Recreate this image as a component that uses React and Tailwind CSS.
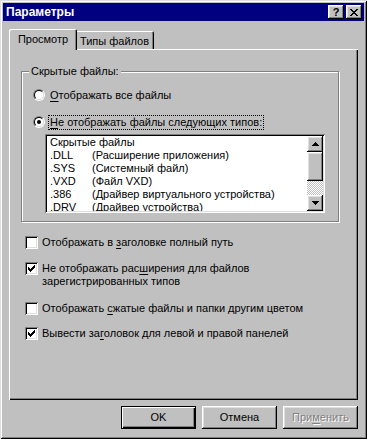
import React from "react";

const raised =
  "bg-[#c0c0c0] shadow-[inset_-1px_-1px_#000,inset_1px_1px_#fff,inset_-2px_-2px_#808080,inset_2px_2px_#dfdfdf]";
const sunken =
  "bg-white shadow-[inset_1px_1px_#808080,inset_-1px_-1px_#fff,inset_2px_2px_#000,inset_-2px_-2px_#dfdfdf]";

const hiddenTypes = [
  [".DLL", "(Расширение приложения)"],
  [".SYS", "(Системный файл)"],
  [".VXD", "(Файл VXD)"],
  [".386", "(Драйвер виртуального устройства)"],
  [".DRV", "(Драйвер устройства)"],
];

const U = ({ children }) => <span className="underline underline-offset-2">{children}</span>;

function Radio({ checked }) {
  return (
    <div className="w-[12px] h-[12px] shrink-0 rounded-full border border-t-[#808080] border-l-[#808080] border-b-white border-r-white">
      <div className="w-[10px] h-[10px] rounded-full border border-t-black border-l-black border-b-[#dfdfdf] border-r-[#dfdfdf] bg-white flex items-center justify-center">
        {checked && <div className="w-[4px] h-[4px] rounded-full bg-black" />}
      </div>
    </div>
  );
}

function Check({ checked }) {
  return (
    <div className={`w-[13px] h-[13px] shrink-0 flex items-center justify-center ${sunken}`}>
      {checked && (
        <svg width="7" height="7" viewBox="0 0 7 7" shapeRendering="crispEdges">
          <path
            fill="#000"
            d="M0 2h1v3H0zM1 3h1v3H1zM2 4h1v3H2zM3 3h1v3H3zM4 2h1v3H4zM5 1h1v3H5zM6 0h1v3H6z"
          />
        </svg>
      )}
    </div>
  );
}

function Arrow({ down }) {
  return (
    <svg width="7" height="4" viewBox="0 0 7 4" shapeRendering="crispEdges">
      <path
        fill="#000"
        d={
          down
            ? "M0 0h7v1H6v1H5v1H4v1H3V3H2V2H1V1H0z"
            : "M3 0h1v1h1v1h1v1h1v1H0V3h1V2h1V1h1z"
        }
      />
    </svg>
  );
}

function Option({ checked, children }) {
  return (
    <div className="flex items-start gap-[4px]">
      <Check checked={checked} />
      <div>{children}</div>
    </div>
  );
}

export default function App() {
  return (
    <div className="w-[367px] h-[439px] bg-[#c0c0c0] p-[3px] flex flex-col text-black font-['Liberation_Sans',Arial,sans-serif] text-[11px] leading-[13px] shadow-[inset_1px_1px_#dfdfdf,inset_-1px_-1px_#000,inset_2px_2px_#fff,inset_-2px_-2px_#808080]">
      {/* Title bar */}
      <div className="h-[18px] bg-[#000080] flex items-center justify-between pl-[3px] pr-[2px]">
        <span className="text-white font-bold text-[12px]">Параметры</span>
        <div className="flex gap-[2px]">
          <div className={`w-[16px] h-[14px] flex items-center justify-center font-bold text-[11px] leading-none ${raised}`}>
            ?
          </div>
          <div className={`w-[16px] h-[14px] flex items-center justify-center ${raised}`}>
            <svg width="8" height="7" viewBox="0 0 8 7" shapeRendering="crispEdges">
              <path
                fill="#000"
                d="M0 0h2v1H0zM6 0h2v1H6zM1 1h2v1H1zM5 1h2v1H5zM2 2h4v1H2zM3 3h2v1H3zM2 4h4v1H2zM1 5h2v1H1zM5 5h2v1H5zM0 6h2v1H0zM6 6h2v1H6z"
              />
            </svg>
          </div>
        </div>
      </div>

      {/* Tabs */}
      <div className="ml-[6px] mt-[8px] h-[20px] flex items-end">
        <div className="relative z-10 w-[68px] h-[21px] -mb-px bg-[#c0c0c0] rounded-t-[2px] flex justify-center pt-[4px] shadow-[inset_1px_1px_#fff,inset_-1px_0_#000,inset_-2px_0_#808080]">
          Просмотр
        </div>
        <div className="-ml-[2px] w-[79px] h-[18px] bg-[#c0c0c0] rounded-t-[2px] flex justify-center pt-[4px] shadow-[inset_1px_1px_#fff,inset_-1px_0_#000,inset_-2px_0_#808080]">
          Типы файлов
        </div>
      </div>

      {/* Panel */}
      <div className="ml-[6px] w-[349px] h-[351px] pl-[12px] pt-[22px] flex flex-col shadow-[inset_1px_1px_#fff,inset_-1px_-1px_#000,inset_-2px_-2px_#808080]">
        {/* Group box */}
        <div className="relative w-[318px] h-[151px] shrink-0 border border-[#808080] pt-[15px] pl-[11px] shadow-[inset_1px_1px_#fff,1px_1px_#fff]">
          <span className="absolute left-[7px] -top-[7px] px-[2px] bg-[#c0c0c0]">Скрытые файлы:</span>

          <div className="h-[16px] flex items-center">
            <Radio />
            <span className="ml-[3px] px-[1px] border border-transparent leading-[13px]">
              <U>О</U>тображать все файлы
            </span>
          </div>
          <div className="mt-[11px] h-[16px] flex items-center">
            <Radio checked />
            <span className="ml-[3px] px-[1px] border border-dotted border-black leading-[13px]">
              <U>Н</U>е отображать файлы следующих типов:
            </span>
          </div>

          {/* List box */}
          <div className={`mt-[4px] ml-[12px] w-[280px] h-[79px] p-[2px] flex ${sunken}`}>
            <div className="flex-1 overflow-hidden pl-[3px]">
              <div className="h-[13px]">Скрытые файлы</div>
              {hiddenTypes.map(([ext, desc]) => (
                <div key={ext} className="h-[13px] flex whitespace-nowrap">
                  <span className="w-[42px] shrink-0">{ext}</span>
                  <span>{desc}</span>
                </div>
              ))}
            </div>
            <div className="w-[16px] flex flex-col">
              <div className={`h-[16px] flex items-center justify-center ${raised}`}>
                <Arrow />
              </div>
              <div className={`h-[29px] ${raised}`} />
              <div className="flex-1 bg-[repeating-conic-gradient(#c0c0c0_0%_25%,#ffffff_0%_50%)] bg-[length:2px_2px]" />
              <div className={`h-[16px] flex items-center justify-center ${raised}`}>
                <Arrow down />
              </div>
            </div>
          </div>
        </div>

        {/* Check boxes */}
        <div className="pl-[4px] flex flex-col">
          <div className="mt-[14px]">
            <Option>
              Отображать в <U>з</U>аголовке полный путь
            </Option>
          </div>
          <div className="mt-[13px]">
            <Option checked>
              Не отображать рас<U>ш</U>ирения для файлов
              <br />
              зарегистрированных типов
            </Option>
          </div>
          <div className="mt-[14px]">
            <Option>
              Отображать <U>с</U>жатые файлы и папки другим цветом
            </Option>
          </div>
          <div className="mt-[12px]">
            <Option checked>
              Вывести за<U>г</U>оловок для левой и правой панелей
            </Option>
          </div>
        </div>
      </div>

      {/* Dialog buttons */}
      <div className="ml-[6px] w-[349px] mt-[6px] flex justify-end gap-[6px]">
        <div className="w-[75px] h-[23px] border border-black flex items-center justify-center bg-[#c0c0c0] shadow-[inset_1px_1px_#fff,inset_-1px_-1px_#000,inset_-2px_-2px_#808080]">
          OK
        </div>
        <div className={`w-[75px] h-[23px] flex items-center justify-center ${raised}`}>Отмена</div>
        <div className={`w-[75px] h-[23px] flex items-center justify-center text-[#808080] [text-shadow:1px_1px_0_#fff] ${raised}`}>
          При<U>м</U>енить
        </div>
      </div>
    </div>
  );
}
